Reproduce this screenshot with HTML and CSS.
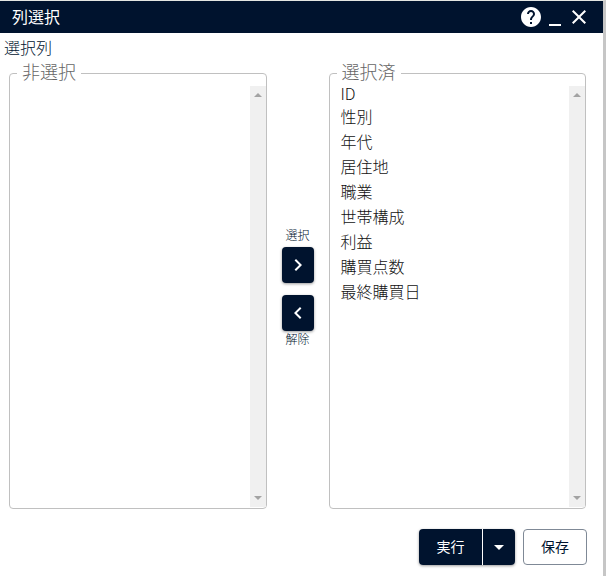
FILE: index.html
```html
<!DOCTYPE html>
<html lang="ja">
<head>
<meta charset="utf-8">
<meta name="viewport" content="width=device-width, initial-scale=1">
<title>列選択</title>
<link rel="stylesheet" href="styles.css">
</head>
<body>
<main class="dialog">
  <header class="titlebar">
    <h1 class="title">列選択</h1>
    <div class="window-actions">
      <button class="icon-button" type="button" aria-label="ヘルプ">
        <svg width="24" height="24" viewBox="0 0 24 24" fill="currentColor"><path d="M12 2C6.48 2 2 6.48 2 12s4.480 10 10 10 10-4.480 10-10S17.520 2 12 2zm1 17h-2v-2h2v2zm2.070-7.750l-.9.920C13.450 12.900 13 13.500 13 15h-2v-.5c0-1.100.450-2.100 1.170-2.830l1.240-1.260c.370-.360.590-.860.590-1.410 0-1.100-.9-2-2-2s-2 .9-2 2H8c0-2.210 1.790-4 4-4s4 1.790 4 4c0 .880-.360 1.680-.930 2.250z"/></svg>
      </button>
      <button class="icon-button" type="button" aria-label="最小化">
        <svg width="24" height="24" viewBox="0 0 24 24" fill="currentColor"><path d="M6 19h12v2H6z"/></svg>
      </button>
      <button class="icon-button" type="button" aria-label="閉じる">
        <svg width="24" height="24" viewBox="0 0 24 24" fill="currentColor"><path d="M19 6.410L17.590 5 12 10.590 6.410 5 5 6.410 10.590 12 5 17.590 6.410 19 12 13.410 17.590 19 19 17.590 13.410 12z"/></svg>
      </button>
    </div>
  </header>
  <h2 class="section-title">選択列</h2>
  <div class="picker">
    <fieldset class="group">
      <legend class="group-title">非選択</legend>
      <div class="pane">
        <ul class="list"></ul>
        <div class="scrollbar" aria-hidden="true"><span class="arrow arrow-up"></span><span class="arrow arrow-down"></span></div>
      </div>
    </fieldset>
    <div class="transfer">
      <label class="caption" for="add">選択</label>
      <button class="move" id="add" type="button">
        <svg width="24" height="24" viewBox="0 0 24 24" fill="currentColor"><path d="M10 6L8.590 7.410 13.170 12l-4.580 4.590L10 18l6-6z"/></svg>
      </button>
      <button class="move" id="remove" type="button">
        <svg width="24" height="24" viewBox="0 0 24 24" fill="currentColor"><path d="M15.410 7.410L14 6l-6 6 6 6 1.410-1.410L10.830 12z"/></svg>
      </button>
      <label class="caption" for="remove">解除</label>
    </div>
    <fieldset class="group">
      <legend class="group-title">選択済</legend>
      <div class="pane">
        <ul class="list">
          <li>ID</li>
          <li>性別</li>
          <li>年代</li>
          <li>居住地</li>
          <li>職業</li>
          <li>世帯構成</li>
          <li>利益</li>
          <li>購買点数</li>
          <li>最終購買日</li>
        </ul>
        <div class="scrollbar" aria-hidden="true"><span class="arrow arrow-up"></span><span class="arrow arrow-down"></span></div>
      </div>
    </fieldset>
  </div>
  <footer class="footer">
    <div class="split">
      <button class="run" type="button">実行</button>
      <button class="run-menu" type="button" aria-label="実行メニュー">
        <svg width="24" height="24" viewBox="0 0 24 24" fill="currentColor"><path d="M7 10l5 5 5-5z"/></svg>
      </button>
    </div>
    <button class="save" type="button">保存</button>
  </footer>
</main>
</body>
</html>
```
FILE: styles.css
```css
:root {
  --navy: #00132e;
  --line: #c0c0c0;
}

* {
  box-sizing: border-box;
}

body {
  margin: 0;
  background: #fff;
  color: #111;
  font: 300 16px/24px "Noto Sans CJK JP", sans-serif;
}

button {
  display: flex;
  align-items: center;
  justify-content: center;
  padding: 0;
  border: 0;
  font: inherit;
  cursor: pointer;
}

.dialog {
  display: flex;
  flex-direction: column;
  min-height: 100vh;
  margin-right: 7px;
  border-top: 1px solid #e4e6e2;
  border-right: 3px solid #c6c6c6;
}

.titlebar {
  display: flex;
  align-items: center;
  justify-content: space-between;
  height: 32px;
  padding: 0 12px;
  background: var(--navy);
  color: #fff;
}

.title {
  margin: 0;
  padding-bottom: 2px;
  font-size: 16px;
  font-weight: 400;
}

.window-actions {
  display: flex;
}

.icon-button {
  background: none;
  color: inherit;
}

.section-title {
  margin: 0;
  padding: 2px 4px 1px;
  color: var(--navy);
  font-size: 16px;
  font-weight: 300;
}

.picker {
  display: flex;
  flex: 1;
  padding: 0 17px 0 9px;
}

.group {
  display: flex;
  flex: 1;
  flex-direction: column;
  min-width: 0;
  margin: 0;
  padding: 0 0 1px;
  border: 1px solid var(--line);
  border-radius: 4px;
}

.group-title {
  margin-left: 7px;
  padding: 0 5px 4px;
  color: #666;
  font-size: 18px;
  line-height: 22px;
}

.pane {
  display: flex;
  flex: 1;
}

.list {
  flex: 1;
  margin: 0;
  padding: 0 0 0 11px;
  list-style: none;
  line-height: 25px;
}

.list li:first-child {
  padding-bottom: 4px;
  line-height: 14px;
}

.scrollbar {
  display: flex;
  flex-direction: column;
  align-items: center;
  justify-content: space-between;
  width: 16px;
  padding: 7px 0;
  background: #f0f0f0;
}

.arrow {
  border: 4px solid transparent;
}

.arrow-up {
  border-top: 0;
  border-bottom-color: #a3a3a3;
}

.arrow-down {
  border-bottom: 0;
  border-top-color: #a3a3a3;
}

.transfer {
  display: flex;
  flex-direction: column;
  align-items: center;
  width: 62px;
  padding-top: 167px;
}

.caption {
  color: var(--navy);
  font-size: 12px;
  line-height: 16px;
}

.move {
  width: 32px;
  height: 36px;
  border-radius: 4px;
  background: var(--navy);
  color: #fff;
  box-shadow: 0 1px 3px rgb(0 0 0 / 40%);
}

.caption + .move {
  margin: 4px 0 12px;
}

.footer {
  display: flex;
  justify-content: flex-end;
  gap: 8px;
  padding: 20px 16px 11px;
  font-size: 14px;
  font-weight: 400;
}

.split {
  display: flex;
  gap: 1px;
  border-radius: 4px;
  box-shadow: 0 1px 3px rgb(0 0 0 / 40%);
}

.run,
.run-menu {
  height: 36px;
  background: var(--navy);
  color: #fff;
}

.run {
  width: 63px;
  padding-bottom: 2px;
  border-radius: 4px 0 0 4px;
}

.run-menu {
  width: 32px;
  border-radius: 0 4px 4px 0;
}

.save {
  width: 64px;
  height: 36px;
  padding-bottom: 2px;
  border: 1px solid #7f8996;
  border-radius: 4px;
  background: #fff;
  color: var(--navy);
}
```
